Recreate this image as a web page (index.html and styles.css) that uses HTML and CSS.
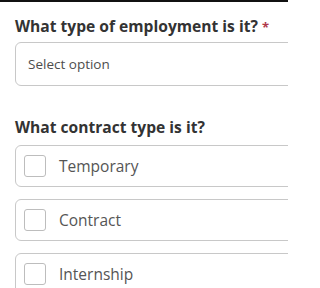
FILE: index.html
```html
<!DOCTYPE html>
<html>
<head>
<meta charset="utf-8">
<link rel="stylesheet" href="styles.css">
</head>
<body>
<div class="topbar"></div>
<main class="form">
  <section class="field">
    <h2 class="label">What type of employment is it? <span class="req">*</span></h2>
    <div class="select">Select option</div>
  </section>
  <section class="field field-contract">
    <h2 class="label">What contract type is it?</h2>
    <div class="options">
      <label class="option"><span class="box"></span><span class="opt-text">Temporary</span></label>
      <label class="option"><span class="box"></span><span class="opt-text">Contract</span></label>
      <label class="option"><span class="box"></span><span class="opt-text">Internship</span></label>
    </div>
  </section>
</main>
</body>
</html>
```

FILE: styles.css
```css
html, body {
  margin: 0;
  padding: 0;
  background: #ffffff;
  overflow: hidden;
}
body {
  width: 288px;
  height: 288px;
  font-family: "Open Sans", "Noto Sans", sans-serif;
}
.topbar {
  height: 2px;
  background: #111;
}
.form {
  padding: 13px 0 0 15px;
  width: 288px;
  height: 286px;
  box-sizing: border-box;
  overflow: hidden;
}
.label {
  margin: 0;
  font-size: 15.6px;
  font-weight: 700;
  color: #333333;
  line-height: 23px;
  white-space: nowrap;
}
.req {
  color: #b0394a;
  font-size: 13px;
}
.select {
  margin-top: 3px;
  margin-right: -20px;
  height: 44px;
  box-sizing: border-box;
  border: 1.5px solid #c8c8c8;
  border-radius: 6px;
  display: flex;
  align-items: center;
  padding-left: 12px;
  font-size: 13.5px;
  color: #4d4d4d;
}
.field-contract {
  margin-top: 30px;
}
.options {
  margin-top: 6px;
  display: flex;
  flex-direction: column;
  gap: 12px;
}
.option {
  margin-right: -20px;
  height: 42px;
  box-sizing: border-box;
  border: 1.5px solid #c8c8c8;
  border-radius: 6px;
  display: flex;
  align-items: center;
  padding-left: 8px;
  gap: 13px;
}
.box {
  width: 22px;
  height: 22px;
  box-sizing: border-box;
  border: 1.5px solid #bdbdbd;
  border-radius: 3px;
  flex: none;
}
.opt-text {
  font-size: 15.5px;
  color: #555555;
}
```
